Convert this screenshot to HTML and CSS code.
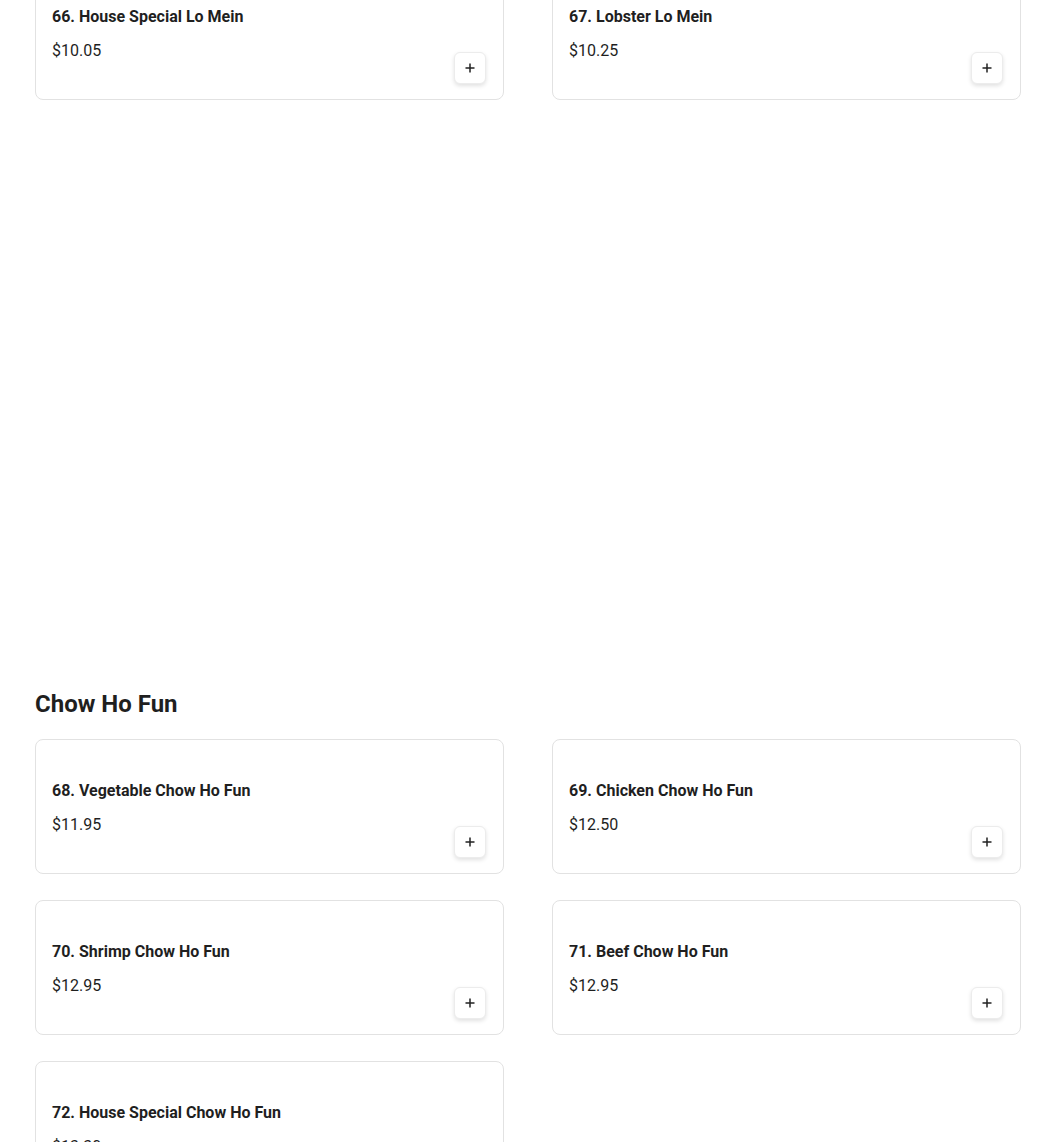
FILE: index.html
```html
<!DOCTYPE html>
<html>
<head>
<meta charset="utf-8">
<link rel="stylesheet" href="styles.css">
</head>
<body>
<div class="page">
  <div class="grid grid-top">
    <div class="card">
      <div class="info">
        <div class="name">66. House Special Lo Mein</div>
        <div class="price">$10.05</div>
      </div>
      <button class="add" aria-label="Add"><svg viewBox="0 0 12 12" width="12" height="12"><path d="M6 1.5v9M1.5 6h9" stroke="#222" stroke-width="1.5" fill="none"/></svg></button>
    </div>
    <div class="card">
      <div class="info">
        <div class="name">67. Lobster Lo Mein</div>
        <div class="price">$10.25</div>
      </div>
      <button class="add" aria-label="Add"><svg viewBox="0 0 12 12" width="12" height="12"><path d="M6 1.5v9M1.5 6h9" stroke="#222" stroke-width="1.5" fill="none"/></svg></button>
    </div>
  </div>
  <div class="spacer"></div>
  <h2 class="section-title">Chow Ho Fun</h2>
  <div class="grid">
    <div class="card">
      <div class="info">
        <div class="name">68. Vegetable Chow Ho Fun</div>
        <div class="price">$11.95</div>
      </div>
      <button class="add" aria-label="Add"><svg viewBox="0 0 12 12" width="12" height="12"><path d="M6 1.5v9M1.5 6h9" stroke="#222" stroke-width="1.5" fill="none"/></svg></button>
    </div>
    <div class="card">
      <div class="info">
        <div class="name">69. Chicken Chow Ho Fun</div>
        <div class="price">$12.50</div>
      </div>
      <button class="add" aria-label="Add"><svg viewBox="0 0 12 12" width="12" height="12"><path d="M6 1.5v9M1.5 6h9" stroke="#222" stroke-width="1.5" fill="none"/></svg></button>
    </div>
    <div class="card">
      <div class="info">
        <div class="name">70. Shrimp Chow Ho Fun</div>
        <div class="price">$12.95</div>
      </div>
      <button class="add" aria-label="Add"><svg viewBox="0 0 12 12" width="12" height="12"><path d="M6 1.5v9M1.5 6h9" stroke="#222" stroke-width="1.5" fill="none"/></svg></button>
    </div>
    <div class="card">
      <div class="info">
        <div class="name">71. Beef Chow Ho Fun</div>
        <div class="price">$12.95</div>
      </div>
      <button class="add" aria-label="Add"><svg viewBox="0 0 12 12" width="12" height="12"><path d="M6 1.5v9M1.5 6h9" stroke="#222" stroke-width="1.5" fill="none"/></svg></button>
    </div>
    <div class="card">
      <div class="info">
        <div class="name">72. House Special Chow Ho Fun</div>
        <div class="price">$13.30</div>
      </div>
      <button class="add" aria-label="Add"><svg viewBox="0 0 12 12" width="12" height="12"><path d="M6 1.5v9M1.5 6h9" stroke="#222" stroke-width="1.5" fill="none"/></svg></button>
    </div>
  </div>
</div>
</body>
</html>
```
FILE: styles.css
```css
html, body {
  margin: 0;
  padding: 0;
  background: #fff;
  overflow: hidden;
}
body {
  font-family: Roboto, "Liberation Sans", sans-serif;
  color: #1f1f1f;
}
.page {
  width: 986px;
  margin-left: 35px;
}
.grid {
  display: grid;
  grid-template-columns: 469px 469px;
  column-gap: 48px;
  row-gap: 26px;
}
.grid-top {
  margin-top: -35px;
}
.card {
  box-sizing: border-box;
  height: 135px;
  border: 1px solid #e2e2e2;
  border-radius: 8px;
  padding: 16px 17px 15px 16px;
  display: flex;
  justify-content: space-between;
  background: #fff;
}
.info {
  padding-top: 23px;
  display: flex;
  flex-direction: column;
  gap: 10px;
}
.name {
  font-size: 16px;
  line-height: 24px;
  font-weight: 700;
}
.price {
  font-size: 16px;
  line-height: 24px;
  font-weight: 400;
}
.add {
  align-self: flex-end;
  width: 32px;
  height: 32px;
  padding: 0;
  border: 1px solid #ececec;
  border-radius: 6px;
  background: #fff;
  box-shadow: 0 2px 4px rgba(0, 0, 0, 0.12);
  display: flex;
  align-items: center;
  justify-content: center;
}
.add svg {
  display: block;
}
.spacer {
  height: 588px;
}
.section-title {
  margin: 0 0 19px 0;
  font-size: 24px;
  line-height: 32px;
  font-weight: 700;
}
```
